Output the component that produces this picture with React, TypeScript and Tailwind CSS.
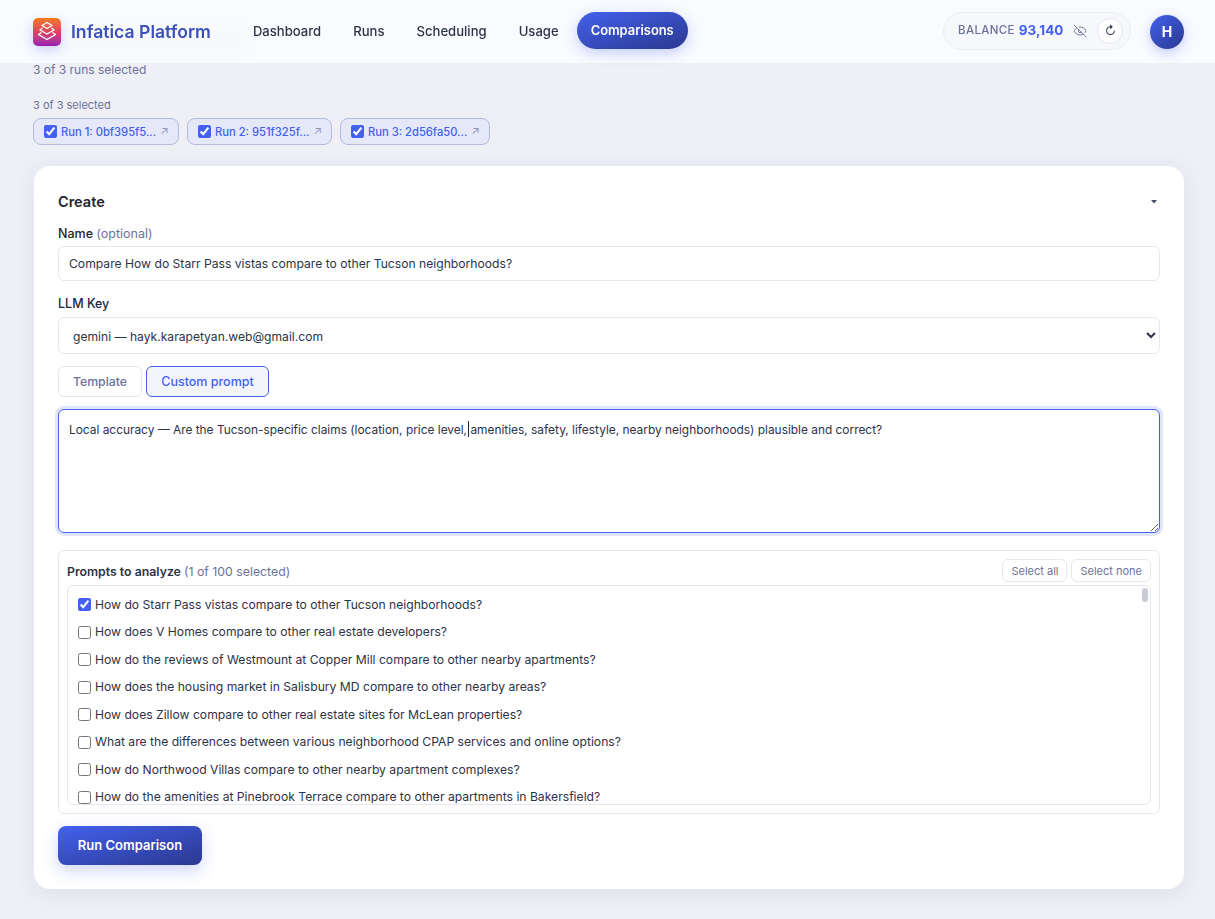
import { EyeOff } from "lucide-react";

const prompts = [
  "How do Starr Pass vistas compare to other Tucson neighborhoods?",
  "How does V Homes compare to other real estate developers?",
  "How do the reviews of Westmount at Copper Mill compare to other nearby apartments?",
  "How does the housing market in Salisbury MD compare to other nearby areas?",
  "How does Zillow compare to other real estate sites for McLean properties?",
  "What are the differences between various neighborhood CPAP services and online options?",
  "How do Northwood Villas compare to other nearby apartment complexes?",
  "How do the amenities at Pinebrook Terrace compare to other apartments in Bakersfield?",
];

const runs = [
  { label: "Run 1: 0bf395f5...", width: "w-[146px]" },
  { label: "Run 2: 951f325f...", width: "w-[145px]" },
  { label: "Run 3: 2d56fa50...", width: "w-[150px]" },
];

const navItems = ["Dashboard", "Runs", "Scheduling", "Usage"];

function Logo() {
  return (
    <div className="w-[28px] h-[28px] rounded-[5px] bg-gradient-to-b from-[#f47b16] via-[#d8435f] to-[#9a16b4] shadow-[0_4px_12px_rgba(67,97,238,0.25)] flex items-center justify-center shrink-0">
      <svg width="24" height="24" viewBox="0 0 24 24" fill="none" stroke="#fff" strokeWidth="1.3" strokeLinejoin="round">
        <path d="M12 2.5l5 3-5 3-5-3z" />
        <path d="M7.5 8l-2.5 2 7 4 7-4-2.5-2" />
        <path d="M6.5 12.500l-3 2 8.500 5 8.500-5-3-2" />
      </svg>
    </div>
  );
}

function Header() {
  return (
    <header className="absolute top-0 inset-x-0 h-[63px] bg-[#fbfcff]/90 backdrop-blur-md flex items-center justify-between pl-[33px] pr-[31px] z-10">
      <div className="flex items-center">
        <Logo />
        <span className="ml-[10px] text-[17.600px] font-semibold text-[#3b50b8] leading-none">Infatica Platform</span>
        <nav className="ml-[28px] flex items-center gap-[4px]">
          {navItems.map((item) => (
            <a key={item} className="px-[14px] py-[10px] text-[13.100px] font-medium text-[#2d3348] leading-none">
              {item}
            </a>
          ))}
          <a className="h-[37px] mb-[2px] px-[14px] flex items-center rounded-full bg-gradient-to-br from-[#4361ee] to-[#2b3990] text-white text-[12.900px] font-semibold shadow-[0_4px_14px_rgba(67,97,238,0.3)]">
            Comparisons
          </a>
        </nav>
      </div>

      <div className="flex items-center gap-[19px]">
        <div className="h-[38px] w-[188px] mb-[2px] rounded-full bg-[#f7f8fc] border border-[#eceef5] flex items-center pl-[14px]">
          <span className="text-[11.500px] font-medium tracking-[0.03em] text-[#6b7299]">BALANCE</span>
          <span className="ml-[4px] text-[13.500px] font-bold text-[#4361ee]">93,140</span>
          <EyeOff className="ml-[10px] w-[14px] h-[14px] text-[#6b7299]" strokeWidth={1.6} />
          <button className="ml-[10px] w-[26px] h-[26px] rounded-full bg-white border border-[#e6e8f0] flex items-center justify-center text-[12px] leading-none text-[#2d3348]">
            ↻
          </button>
        </div>
        <div className="w-[34px] h-[34px] rounded-full bg-gradient-to-br from-[#4361ee] to-[#2b3990] text-white text-[14px] font-bold flex items-center justify-center shadow-[0_4px_12px_rgba(67,97,238,0.3)]">
          H
        </div>
      </div>
    </header>
  );
}

function RunChip({ label, width }: { label: string; width: string }) {
  return (
    <label className={`${width} h-[27px] rounded-[8px] bg-[#e4e8f8] border border-[#b3bade] flex items-center pl-[10px] text-[11.200px] font-medium text-[#4361ee]`}>
      <input type="checkbox" defaultChecked className="w-[13px] h-[13px] accent-[#4361ee] m-0" />
      <span className="ml-[4px] pt-[1px]">{label}</span>
      <span className="ml-[4px] text-[11px] font-normal text-[#8f96b8]">↗</span>
    </label>
  );
}

function PromptRow({ text, checked }: { text: string; checked: boolean }) {
  return (
    <label className="h-[27.5px] flex items-center pl-[10px] shrink-0 text-[12.150px] text-[#2d3348]">
      <input type="checkbox" defaultChecked={checked} className="w-[13px] h-[13px] accent-[#4361ee] m-0" />
      <span className="ml-[4px]">{text}</span>
    </label>
  );
}

export default function App() {
  return (
    <div className="relative h-[919px] overflow-hidden bg-[#eff0f6] font-['Inter',sans-serif]">
      <Header />

      <main className="px-[33px]">
        {/* page title scrolled under the header, only its blur shows */}
        <div className="h-[62px] pt-[32px]">
          <div className="h-[16px] w-[215px] rounded bg-[#c3c8d8]" />
        </div>

        <p className="h-[14px] mt-[1px] text-[12px] leading-[14px] text-[#6b7299]">3 of 3 runs selected</p>
        <p className="mt-[21px] h-[14px] text-[11px] leading-[14px] text-[#6b7299]">3 of 3 selected</p>
        <div className="mt-[6px] flex gap-[8px]">
          {runs.map((r) => (
            <RunChip key={r.label} label={r.label} width={r.width} />
          ))}
        </div>

        {/* Create card */}
        <section className="mt-[21px] ml-px w-[1150px] h-[723px] rounded-[16px] bg-white shadow-[0_4px_24px_rgba(40,50,100,0.09)] px-[24px] pt-[26px]">
          <div className="flex items-center justify-between h-[19px]">
            <h2 className="text-[14.500px] font-semibold text-[#1f2437]">Create</h2>
            <svg width="6" height="4" viewBox="0 0 6 4" className="mr-[3px]" fill="#4b5168">
              <path d="M0 0h6L3 3.500z" />
            </svg>
          </div>

          <label className="block mt-[15px] h-[16px] text-[12.500px] leading-[16px] font-medium text-[#1f2437]">
            Name <span className="font-normal text-[#6b7299]">(optional)</span>
          </label>
          <input
            readOnly
            value="Compare How do Starr Pass vistas compare to other Tucson neighborhoods?"
            className="mt-[4px] block w-full h-[35px] rounded-[6px] border border-[#e6e8f0] px-[10px] text-[12.150px] text-[#2d3348] outline-none"
          />

          <label className="block mt-[15px] h-[16px] text-[12.500px] leading-[16px] font-medium text-[#1f2437]">LLM Key</label>
          <select className="mt-[5px] block w-full h-[37px] rounded-[6px] border border-[#e6e8f0] bg-white px-[10px] pt-[1px] text-[12.100px] text-[#2d3348] outline-none">
            <option>gemini — hayk.karapetyan.web@gmail.com</option>
          </select>

          <div className="mt-[12px] flex gap-[4px]">
            <button className="h-[31px] w-[84px] pt-[2px] rounded-[6px] border border-[#e6e8f0] bg-white text-[12.300px] font-medium text-[#6b7299]">Template</button>
            <button className="h-[31px] w-[123px] pt-[2px] rounded-[6px] border border-[#4361ee] bg-[#f4f5fb] text-[12.500px] font-medium text-[#4361ee]">Custom prompt</button>
          </div>

          <div className="relative mt-[12px]">
            <textarea
              readOnly
              value="Local accuracy — Are the Tucson-specific claims (location, price level, amenities, safety, lifestyle, nearby neighborhoods) plausible and correct?"
              className="block w-full h-[124px] rounded-[6px] border border-[#4361ee] ring-[3px] ring-[#e0e5f9] px-[10px] py-[10px] text-[11.900px] leading-[20px] text-[#2d3348] outline-none resize-y"
            />
            {/* text caret */}
            <div className="absolute left-[410px] top-[12px] w-px h-[16px] bg-[#1f2437]" />
          </div>

          <div className="mt-[17px] h-[264px] rounded-[6px] border border-[#e6e8f0] px-[8px] pt-[8px]">
            <div className="flex items-center justify-between h-[23px]">
              <p className="text-[12.300px] font-semibold text-[#2d3348] pt-[3px]">
                Prompts to analyze <span className="font-normal text-[#6b7299]">(1 of 100 selected)</span>
              </p>
              <div className="flex gap-[4px]">
                <button className="h-[23px] px-[8px] pt-[1px] rounded-[6px] border border-[#e6e8f0] bg-white text-[11px] text-[#6b7299]">Select all</button>
                <button className="h-[23px] px-[8px] pt-[1px] rounded-[6px] border border-[#e6e8f0] bg-white text-[11px] text-[#6b7299]">Select none</button>
              </div>
            </div>
            <div className="relative mt-[3px] h-[220px] rounded-[6px] border border-[#e6e8f0] flex flex-col pt-[5px] overflow-hidden">
              {prompts.map((text, i) => (
                <PromptRow key={text} text={text} checked={i === 0} />
              ))}
              {/* scrollbar thumb */}
              <div className="absolute right-[2px] top-[2px] w-[6px] h-[14px] rounded-full bg-[#c9ccd8]" />
            </div>
          </div>

          <button className="mt-[12px] h-[39px] w-[144px] rounded-[8px] bg-gradient-to-br from-[#4361ee] to-[#2b3990] text-white text-[13px] font-semibold shadow-[0_6px_16px_rgba(67,97,238,0.25)]">
            Run Comparison
          </button>
        </section>
      </main>
    </div>
  );
}
